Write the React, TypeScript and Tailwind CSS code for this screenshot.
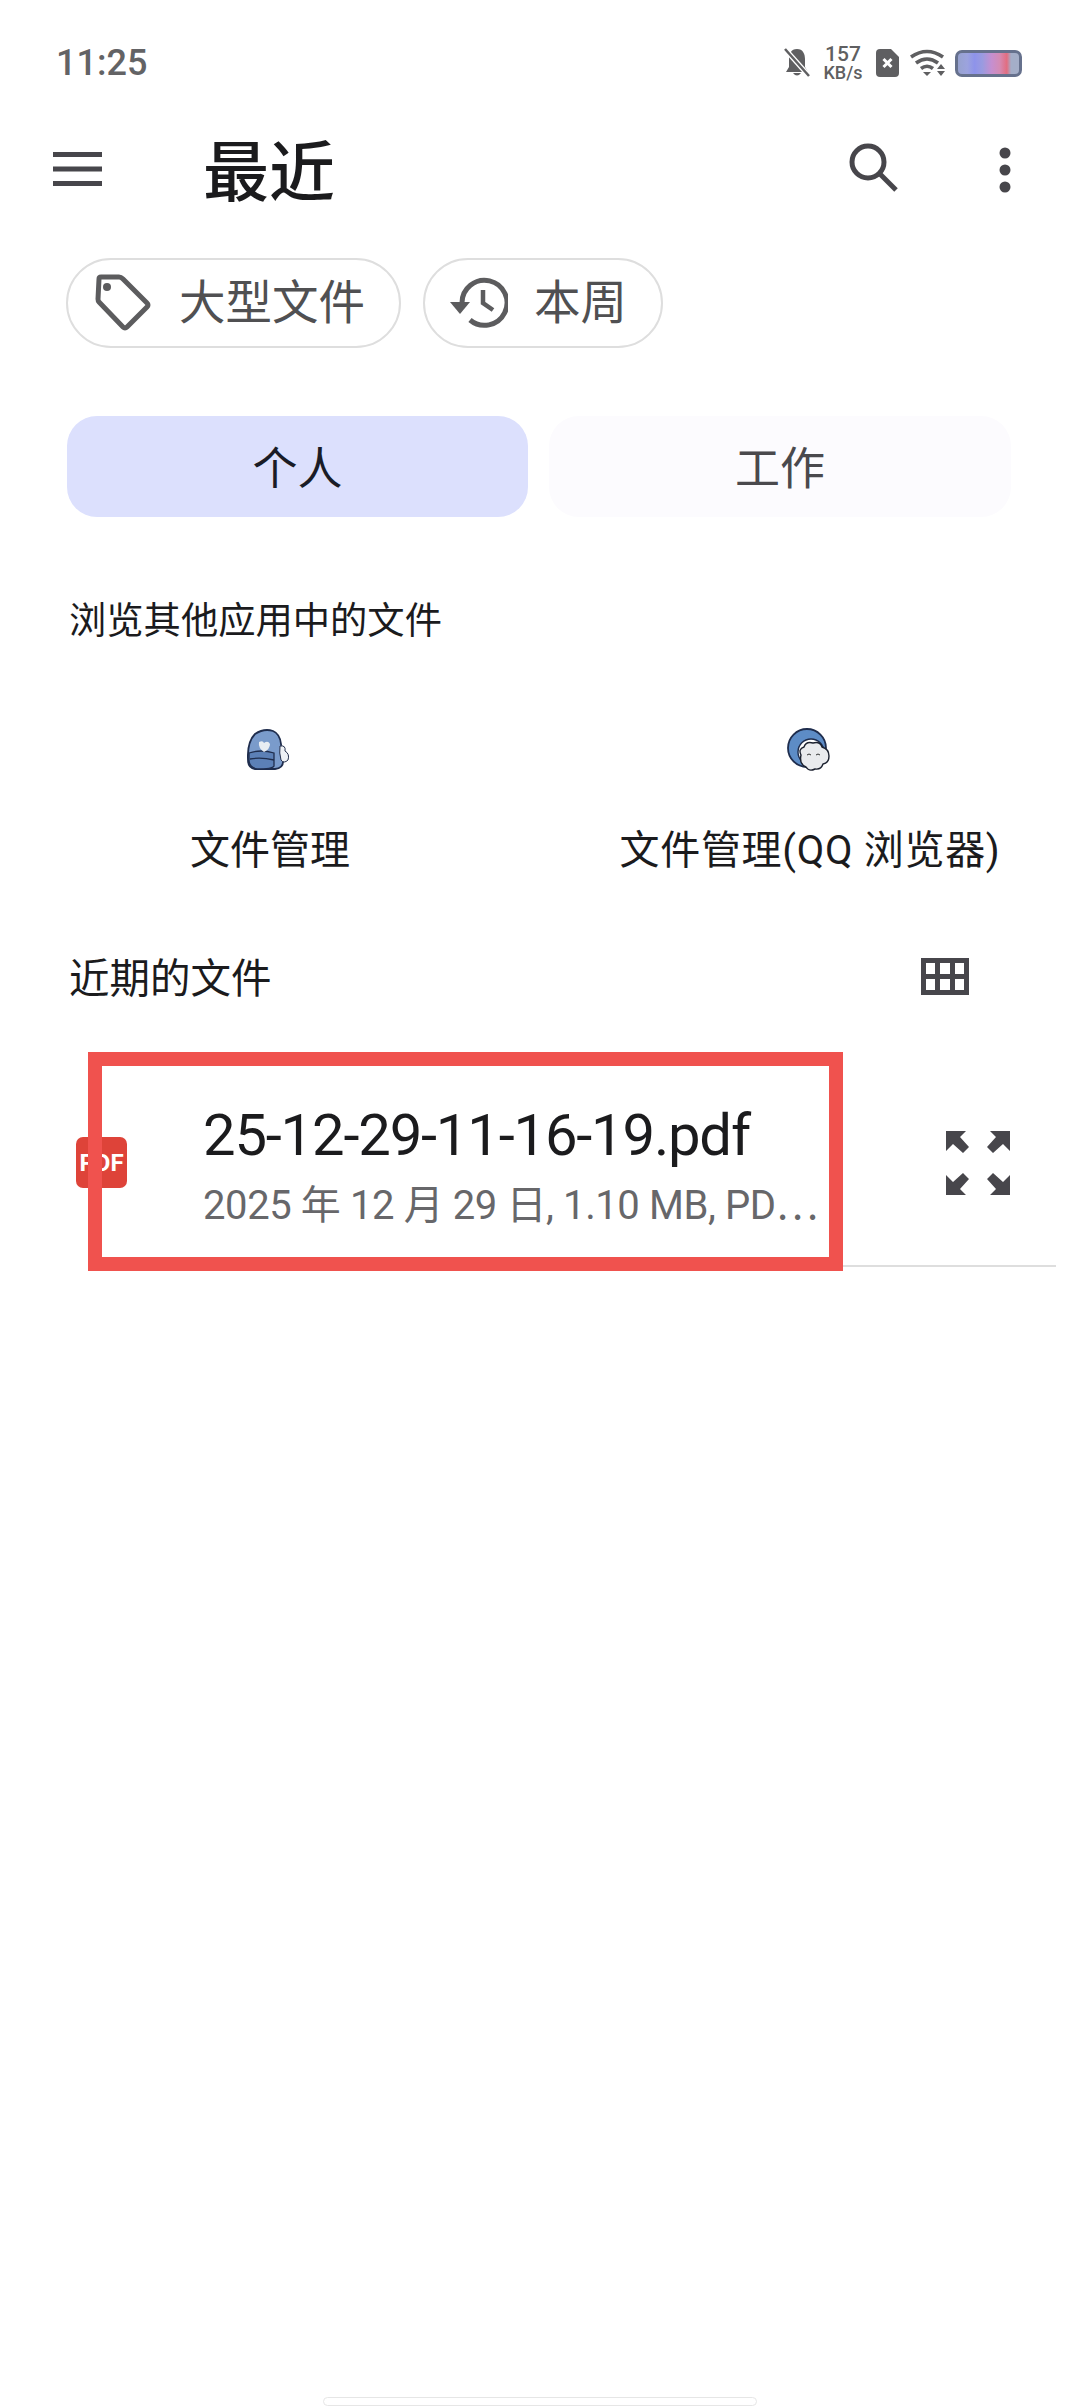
import React from "react";

const FONT = "[font-family:'Roboto','Noto_Sans_CJK_SC',sans-serif]";

function Hamburger() {
  return (
    <svg width="50" height="36" viewBox="0 0 50 36" fill="#47464b">
      <rect x="0" y="0" width="49" height="5" />
      <rect x="0" y="14.5" width="49" height="5" />
      <rect x="0" y="29" width="49" height="5" />
    </svg>
  );
}

function TagIcon() {
  return (
    <svg width="56" height="58" viewBox="0 0 56 58" fill="none" stroke="#5c5c5e" strokeWidth="5" strokeLinejoin="round">
      <path d="M4 5 Q4 3 6 3 H24 Q26 3 28 5 L52 29 Q54 31 52 33 L32 53 Q30 55 28 53 L4 28 Q3 27 3 25 Z" />
      <circle cx="12" cy="13" r="4" fill="#5c5c5e" stroke="none" />
    </svg>
  );
}

function HistoryIcon() {
  return (
    <svg width="58" height="52" viewBox="0 0 58 52" fill="none">
      <path d="M12 26 A 22.5 22.5 0 1 1 20 43" stroke="#5c5c5e" strokeWidth="5" />
      <path d="M0 25 H20 L10 37 Z" fill="#5c5c5e" />
      <path d="M33 13 V26 L43 33" stroke="#5c5c5e" strokeWidth="4.5" />
    </svg>
  );
}

function StatusIcons() {
  return (
    <div className="flex items-center">
      <svg width="26" height="30" viewBox="0 0 26 30" className="mr-[14px]">
        <path d="M13 1 C7 1 5 6 5 11 V19 L2 24 H24 L21 19 V11 C21 6 19 1 13 1 Z M9 25 Q13 30 17 25 Z" fill="#5f5f61" />
        <path d="M1 1 L25 28" stroke="#ffffff" strokeWidth="5" />
        <path d="M1 1 L25 28" stroke="#5f5f61" strokeWidth="2.5" />
      </svg>
      <div className="flex flex-col items-center w-[38px] mr-[14px] font-medium text-[#5f5f61]">
        <span className="text-[21px] leading-[20px]">157</span>
        <span className="text-[18px] leading-[18px] whitespace-nowrap">KB/s</span>
      </div>
      <svg width="24" height="28" viewBox="0 0 24 28" className="mr-[10px]">
        <path d="M4 0 H15 L23 8 V24 Q23 28 19 28 H4 Q0 28 0 24 V4 Q0 0 4 0 Z" fill="#5f5f61" />
        <path d="M7.5 10 L15.5 18 M15.5 10 L7.5 18" stroke="#fff" strokeWidth="3" />
      </svg>
      <svg width="36" height="28" viewBox="0 0 36 28" className="mr-[9px]" fill="none" stroke="#5f5f61" strokeWidth="3.6">
        <path d="M1 8 Q17 -3 33 8" />
        <path d="M6 14 Q17 6 28 14" />
        <path d="M11 19.5 Q17 15 23 19.5" />
        <path d="M13 23 L17 27 L21 23 Z" fill="#5f5f61" stroke="none" />
        <path d="M27 20 H35 L31 15 Z M27 22 H35 L31 27 Z" fill="#5f5f61" stroke="none" />
      </svg>
      <div className="w-[67px] h-[27px] rounded-[7px] border-[3px] border-[#66718d] bg-[linear-gradient(90deg,#97a2cf_0%,#9ca3de_15%,#8e93ea_27%,#9a9be0_40%,#c58fd0_55%,#d48bb5_68%,#e26d80_80%,#a4aec8_87%,#a4aec8_100%)]" />
    </div>
  );
}

function Chip({ icon, label, className }: { icon: React.ReactNode; label: string; className: string }) {
  return (
    <div className={`h-[90px] rounded-full border-[2.5px] border-[#dedede] flex items-center ${className}`}>
      {icon}
      <span className="text-[46.5px] leading-none text-[#505052]">{label}</span>
    </div>
  );
}

function Backpack() {
  return (
    <svg width="46" height="46" viewBox="0 0 46 46">
      <path d="M8 6 Q17 0 26 3 Q33 6 34 16 L36 34 Q36 40 28 41 H8 Q1 40 1 32 Q0 14 8 6 Z" fill="#7a9bcb" stroke="#1f2d4d" strokeWidth="1.8" />
      <path d="M2 25 Q14 21 27 25 V38 Q26 41 10 41 Q2 39 2 32 Z" fill="#5c80b6" stroke="#1f2d4d" strokeWidth="1.3" />
      <path d="M3 31 Q14 29 27 32" fill="none" stroke="#1f2d4d" strokeWidth="1.3" />
      <path d="M12 14 Q16 12 17 15 Q21 12 23 16 Q23 21 17 24 Q11 20 12 14 Z" fill="#e8edf3" />
      <path d="M33 18 Q39 17 38 23 Q43 26 41 32 Q37 36 34 32 Q32 25 33 18 Z" fill="#eef1f5" stroke="#25304c" strokeWidth="1" />
    </svg>
  );
}

function CloudMoon() {
  return (
    <svg width="46" height="46" viewBox="0 0 46 46">
      <circle cx="20" cy="20" r="19" fill="#5d8cc6" stroke="#1f2d4d" strokeWidth="1.8" />
      <circle cx="24" cy="24" r="13" fill="#fff" stroke="#1f2d4d" strokeWidth="1.4" />
      <path d="M14 27 Q11 21 17 19 Q19 13 26 15 Q33 13 35 19 Q42 21 42 28 Q42 35 36 36 Q34 42 28 41 Q22 44 19 39 Q12 36 14 27 Z" fill="#e9ebee" stroke="#1c2230" strokeWidth="1.4" />
      <path d="M20 27 Q22 25 24 27 M29 27 Q31 25 33 27" fill="none" stroke="#333" strokeWidth="1" />
    </svg>
  );
}

function GridIcon() {
  return (
    <svg width="48" height="37" viewBox="0 0 48 37" fill="#47464b" fillRule="evenodd">
      <path d="M0 0 H48 V37 H0 Z M5 5 V16 H14 V5 Z M19 5 V16 H29 V5 Z M34 5 V16 H43 V5 Z M5 21 V32 H14 V21 Z M19 21 V32 H29 V21 Z M34 21 V32 H43 V21 Z" />
    </svg>
  );
}

function ExpandIcon() {
  return (
    <svg width="64" height="64" viewBox="0 0 64 64" fill="#47464b">
      <path d="M0 0 H20 L14 6 L23 16 L17 22 L7 13 L0 20 Z" />
      <path d="M64 0 H44 L50 6 L41 16 L47 22 L57 13 L64 20 Z" />
      <path d="M0 64 H20 L14 58 L23 48 L17 42 L7 51 L0 44 Z" />
      <path d="M64 64 H44 L50 58 L41 48 L47 42 L57 51 L64 44 Z" />
    </svg>
  );
}

export default function App() {
  return (
    <div className={`w-[1080px] h-[2408px] bg-white relative overflow-hidden flex flex-col ${FONT}`}>
      {/* status bar */}
      <div className="h-[62px] mt-[32px] pl-[56px] pr-[58px] flex items-center justify-between shrink-0">
        <span className="text-[36px] leading-none font-medium text-[#636365]">11:25</span>
        <StatusIcons />
      </div>

      {/* toolbar */}
      <div className="h-[100px] mt-[26px] pl-[53px] pr-[69px] flex items-center shrink-0">
        <Hamburger />
        <span className="ml-[100px] pt-[7px] text-[66px] leading-none font-medium text-[#1b1b1d]">最近</span>
        <svg width="50" height="50" viewBox="0 0 50 50" fill="none" stroke="#47464b" strokeWidth="5" className="ml-auto mr-[100px] -translate-y-[2px]">
          <circle cx="19" cy="19" r="16" />
          <path d="M30 30 L47 47" />
        </svg>
        <svg width="12" height="46" viewBox="0 0 12 46" fill="#47464b">
          <circle cx="6" cy="6" r="5.5" />
          <circle cx="6" cy="23" r="5.5" />
          <circle cx="6" cy="40" r="5.5" />
        </svg>
      </div>

      {/* chips */}
      <div className="mt-[38px] pl-[66px] flex gap-[22px] shrink-0">
        <Chip className="w-[335px] pl-[27px] gap-[28px]" icon={<TagIcon />} label="大型文件" />
        <Chip className="w-[240px] pl-[25px] gap-[26px]" icon={<HistoryIcon />} label="本周" />
      </div>

      {/* tabs */}
      <div className="mt-[68px] pl-[67px] flex gap-[21px] shrink-0">
        <div className="w-[461px] h-[101px] rounded-[30px] bg-[#dce0fd] flex items-center justify-center pt-[5px] text-[45px] leading-none text-[#1a1c26]">个人</div>
        <div className="w-[462px] h-[101px] rounded-[30px] bg-[#fcfbfe] flex items-center justify-center pt-[5px] text-[45px] leading-none text-[#4a494d]">工作</div>
      </div>

      {/* other apps */}
      <div className="mt-[81px] pl-[69px] text-[37.3px] leading-[46px] text-[#1b1b1d] shrink-0">浏览其他应用中的文件</div>

      <div className="mt-[84px] grid grid-cols-2 w-[1080px] shrink-0">
        <div className="flex flex-col items-center">
          <Backpack />
          <span className="mt-[54px] text-[40px] leading-[46px] text-[#1b1b1d]">文件管理</span>
        </div>
        <div className="flex flex-col items-center">
          <CloudMoon />
          <span className="mt-[54px] text-[40px] leading-[46px] tracking-[0.7px] text-[#1b1b1d] whitespace-nowrap">文件管理(QQ 浏览器)</span>
        </div>
      </div>

      {/* recent */}
      <div className="mt-[82px] pl-[69px] pr-[111px] flex items-center justify-between shrink-0">
        <span className="text-[40.5px] leading-[46px] text-[#1b1b1d]">近期的文件</span>
        <div className="-translate-y-[3px]"><GridIcon /></div>
      </div>

      {/* file row */}
      <div className="relative mt-[50px] h-[219px] pl-[76px] pr-[70px] flex items-center shrink-0">
        <div className="w-[51px] h-[51px] rounded-[7px] bg-[#de4339] flex items-center justify-center text-white text-[24px] leading-none font-bold translate-y-[1px]">PDF</div>
        <div className="ml-[76px] w-[617px] flex flex-col translate-y-[3px]">
          <span className="text-[58px] leading-[70px] tracking-[-1.2px] text-[#1b1b1d] whitespace-nowrap translate-y-[2px]">25-12-29-11-16-19.pdf</span>
          <span className="mt-[13px] text-[40px] leading-[50px] tracking-[-0.4px] text-[#67676a] whitespace-nowrap">2025 年 12 月 29 日, 1.10 MB, PD⋯</span>
        </div>
        <div className="ml-auto translate-y-[1px]"><ExpandIcon /></div>
        {/* divider */}
        <div className="absolute left-[200px] right-[24px] bottom-[4px] h-[2.5px] bg-[#dedede]" />
        {/* annotation */}
        <div className="absolute left-[88px] top-0 w-[755px] h-[219px] border-[14px] border-[#f0524e]" />
      </div>

      {/* home indicator */}
      <div className="absolute left-[323px] bottom-[2px] w-[434px] h-[9px] rounded-full border-[1.5px] border-[#e6e6e6] bg-white" />
    </div>
  );
}
